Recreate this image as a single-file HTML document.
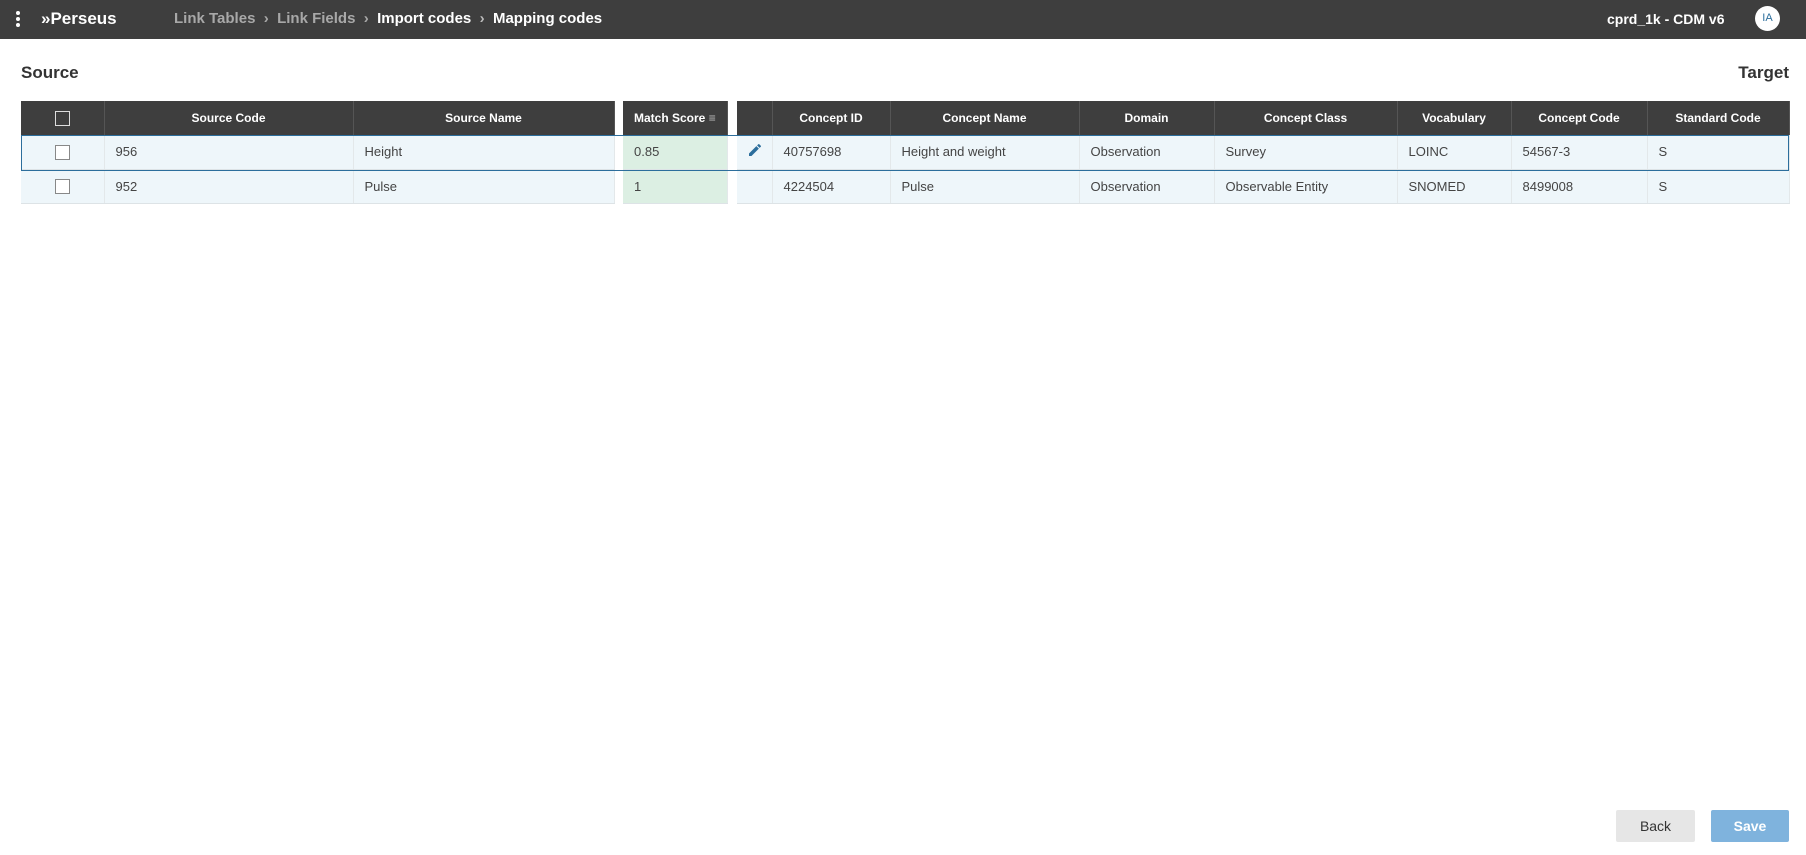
<!DOCTYPE html>
<html><head><meta charset="utf-8"><style>
*{box-sizing:border-box;margin:0;padding:0}
body{width:1806px;height:855px;background:#fff;font-family:"Liberation Sans",sans-serif;position:relative;overflow:hidden;color:#333}
.top{position:absolute;left:0;top:0;width:1806px;height:39px;background:#3e3e3e;color:#fff}
.abs{position:absolute}
.bc{position:absolute;top:10px;font-size:15px;font-weight:bold;white-space:nowrap}
table{position:absolute;border-collapse:collapse;font-size:13px;table-layout:fixed}
th{background:#3e3e3e;color:#fff;font-size:12px;font-weight:bold;height:34px;border-right:1px solid #555;text-align:center}
td{height:34px;padding-left:11px;border-right:1px solid #e3e8ea;border-bottom:1px solid #dde3e6;background:#eef6fa;color:#444}
.cb{display:inline-block;width:15px;height:15px;border:1px solid #888;background:#fff;vertical-align:middle}
.h .cb{background:transparent;border-color:#ddd}
</style></head><body>
<div class="top">
 <div class="abs" style="left:16px;top:11px;width:4px;height:4px;border-radius:2px;background:#fff;box-shadow:0 6px 0 #fff,0 12px 0 #fff"></div>
 <div class="abs" style="left:41px;top:9px;font-size:17px;font-weight:bold">&#187;Perseus</div>
 <div class="bc" style="left:174px;color:#a8a8a8">Link Tables &nbsp;›&nbsp; Link Fields &nbsp;›&nbsp; <span style="color:#fff">Import codes &nbsp;</span><span style="color:#bbb">›</span><span style="color:#fff">&nbsp; Mapping codes</span></div>
 <div class="abs" style="left:1607px;top:11px;font-size:14px;font-weight:bold">cprd_1k - CDM v6</div>
 <div class="abs" style="left:1755px;top:6px;width:25px;height:25px;border-radius:50%;background:#fff;color:#2c6e9c;font-size:11px;text-align:center;line-height:25px">IA</div>
</div>
<div class="abs" style="left:21px;top:63px;font-size:17px;font-weight:bold">Source</div>
<div class="abs" style="right:17px;top:63px;font-size:17px;font-weight:bold">Target</div>

<table style="left:21px;top:101px;width:593px">
<colgroup><col style="width:83px"><col style="width:249px"><col style="width:261px"></colgroup>
<tr class="h"><th><span class="cb"></span></th><th>Source Code</th><th>Source Name</th></tr>
<tr><td style="text-align:center;padding:0"><span class="cb"></span></td><td>956</td><td>Height</td></tr>
<tr><td style="text-align:center;padding:0"><span class="cb"></span></td><td>952</td><td>Pulse</td></tr>
</table>

<table style="left:623px;top:101px;width:105px">
<tr><th style="text-align:left;padding-left:11px">Match Score <span style="color:#bbb">&#8801;</span></th></tr>
<tr><td style="background:#dcefe3">0.85</td></tr>
<tr><td style="background:#dcefe3">1</td></tr>
</table>

<table style="left:737px;top:101px;width:1052px">
<colgroup><col style="width:35px"><col style="width:118px"><col style="width:189px"><col style="width:135px"><col style="width:183px"><col style="width:114px"><col style="width:136px"><col style="width:142px"></colgroup>
<tr><th></th><th>Concept ID</th><th>Concept Name</th><th>Domain</th><th>Concept Class</th><th>Vocabulary</th><th>Concept Code</th><th>Standard Code</th></tr>
<tr><td style="padding-left:10px"><svg width="16" height="16" viewBox="0 0 24 24"><path d="M3 17.25V21h3.75L17.81 9.94l-3.75-3.75L3 17.25zM20.71 7.04a1 1 0 000-1.41l-2.34-2.34a1 1 0 00-1.41 0l-1.83 1.83 3.75 3.75 1.83-1.83z" fill="#2c6e9c"/></svg></td><td>40757698</td><td>Height and weight</td><td>Observation</td><td>Survey</td><td>LOINC</td><td>54567-3</td><td>S</td></tr>
<tr><td></td><td>4224504</td><td>Pulse</td><td>Observation</td><td>Observable Entity</td><td>SNOMED</td><td>8499008</td><td>S</td></tr>
</table>
<div class="abs" style="left:21px;top:135px;width:1768px;height:36px;border:1.5px solid #2c6e9c;pointer-events:none"></div>

<div class="abs" style="left:1616px;top:810px;width:79px;height:32px;background:#e6e6e6;border-radius:2px;text-align:center;line-height:32px;font-size:14px;color:#333">Back</div>
<div class="abs" style="left:1711px;top:810px;width:78px;height:32px;background:#7fb3dd;border-radius:2px;text-align:center;line-height:32px;font-size:14px;color:#fff;font-weight:bold">Save</div>
</body></html>
